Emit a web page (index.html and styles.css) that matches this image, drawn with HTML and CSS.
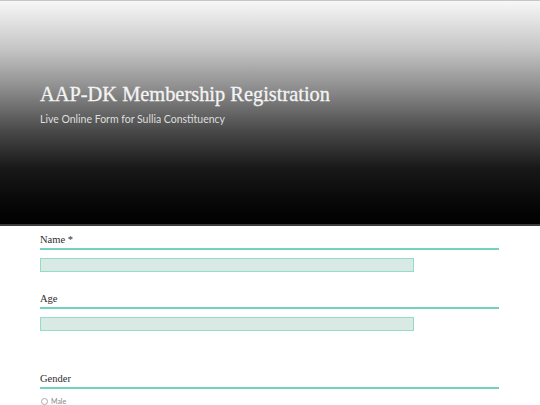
FILE: index.html
```html
<!DOCTYPE html>
<html>
<head>
<meta charset="utf-8">
<link rel="stylesheet" href="styles.css">
</head>
<body>
<header class="hero">
  <h1 class="title">AAP-DK Membership Registration</h1>
  <p class="subtitle">Live Online Form for Sullia Constituency</p>
</header>
<form class="form">
  <div class="field">
    <div class="label">Name *</div>
    <div class="input"></div>
  </div>
  <div class="field field-age">
    <div class="label">Age</div>
    <div class="input"></div>
  </div>
  <div class="field field-last">
    <div class="label">Gender</div>
    <div class="option"><span class="radio"></span><span class="option-text">Male</span></div>
  </div>
</form>
</body>
</html>
```
FILE: styles.css
```css
html, body {
  margin: 0;
  padding: 0;
  background: #ffffff;
  height: 405px;
  overflow: hidden;
}
.hero {
  height: 223px;
  border-top: 1px solid #c6c6c6;
  border-bottom: 2px solid #3c3c3c;
  background: linear-gradient(to bottom, #f7f7f7 0%, #c4c4c4 22%, #8a8a8a 40%, #4a4a4a 58%, #181818 75%, #0a0a0a 88%, #000000 100%);
  padding: 0 40px;
  box-sizing: content-box;
  display: flex;
  flex-direction: column;
}
.title {
  margin: 80px 0 0 0;
  font-family: "Liberation Serif", "DejaVu Serif", serif;
  font-weight: normal;
  font-size: 20.4px;
  line-height: 26px;
  color: #f4f4f4;
  -webkit-text-stroke: 0.3px #f4f4f4;
}
.subtitle {
  margin: 5px 0 0 0;
  font-family: Lato, "Open Sans", sans-serif;
  font-size: 10.5px;
  line-height: 14px;
  color: #dedede;
}
.form {
  margin: 0;
  padding: 7px 40px 0 40px;
  width: 459px;
}
.field {
  margin-bottom: 20px;
}
.field-age {
  margin-bottom: 41px;
}
.field-last {
  margin-bottom: 0;
}
.label {
  font-family: "Liberation Serif", "DejaVu Serif", serif;
  font-size: 10.5px;
  line-height: 13px;
  padding-bottom: 2px;
  color: #2e2e2e;
  border-bottom: 2px solid #72d2bf;
}
.input {
  margin-top: 8px;
  width: 372px;
  height: 12px;
  background: #d9eae5;
  border: 1px solid #92dcc9;
}
.option {
  margin-top: 8px;
  display: flex;
  align-items: center;
  gap: 3px;
  font-family: Lato, "Open Sans", sans-serif;
  font-size: 7px;
  line-height: 9px;
  color: #888888;
}
.radio {
  width: 5px;
  height: 5px;
  border: 1px solid #aaaaaa;
  border-radius: 50%;
  margin-left: 1px;
}
```
